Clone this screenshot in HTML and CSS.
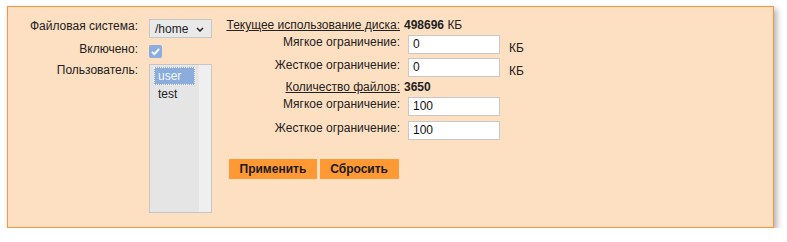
FILE: index.html
```html
<!DOCTYPE html>
<html>
<head>
<meta charset="utf-8">
<link rel="stylesheet" href="styles.css">
</head>
<body>
<div class="panel">
  <div class="left">
    <div class="lbl">Файловая система:</div>
    <div class="select"><span>/home</span><svg class="chev" width="8" height="5" viewBox="0 0 8 5"><path d="M1 1 L4 4 L7 1" fill="none" stroke="#222" stroke-width="1.5"/></svg></div>
    <div class="lbl">Включено:</div>
    <div class="check"><svg width="13" height="13" viewBox="0 0 13 13"><path d="M3 6.8 L5.4 9.2 L10.2 3.8" fill="none" stroke="#fff" stroke-width="1.8"/></svg></div>
    <div class="lbl">Пользователь:</div>
    <div class="listbox">
      <div class="options">
        <div class="opt sel">user</div>
        <div class="opt">test</div>
      </div>
      <div class="scroll"></div>
    </div>
  </div>
  <div class="right">
    <div class="quota">
      <div class="head"><span class="u">Текущее использование диска:</span></div>
      <div class="val"><b>498696</b> КБ</div>
      <div></div>

      <div class="qlbl">Мягкое ограничение:</div>
      <div class="field"><div class="input">0</div></div>
      <div class="unit">КБ</div>

      <div class="qlbl">Жесткое ограничение:</div>
      <div class="field"><div class="input">0</div></div>
      <div class="unit">КБ</div>

      <div class="head"><span class="u">Количество файлов:</span></div>
      <div class="val"><b>3650</b></div>
      <div></div>

      <div class="qlbl">Мягкое ограничение:</div>
      <div class="field"><div class="input">100</div></div>
      <div></div>

      <div class="qlbl">Жесткое ограничение:</div>
      <div class="field"><div class="input">100</div></div>
      <div></div>
    </div>
    <div class="buttons">
      <button class="btn">Применить</button>
      <button class="btn">Сбросить</button>
    </div>
  </div>
</div>
</body>
</html>
```
FILE: styles.css
```css
html, body {
  margin: 0;
  padding: 0;
  background: #ffffff;
}
body {
  font-family: "Liberation Sans", Arial, sans-serif;
  font-size: 12px;
  line-height: 14px;
  color: #222;
}
.panel {
  box-sizing: border-box;
  margin: 6px 0 0 7px;
  width: 767px;
  height: 222px;
  background: #fddfc2;
  border: 1px solid #f7983f;
  box-shadow: 3px 3px 6px rgba(0, 0, 0, 0.3);
  padding-top: 11px;
  display: flex;
  column-gap: 11px;
}
.left {
  margin-top: 1px;
  display: grid;
  grid-template-columns: 130px 63px;
  grid-template-rows: 23px 21px auto;
  column-gap: 11px;
  align-items: start;
}
.lbl {
  text-align: right;
  white-space: nowrap;
}
.select {
  box-sizing: border-box;
  height: 19px;
  border: 1px solid #c6c6c6;
  background: #e9e9e9;
  padding-left: 5px;
  padding-right: 7px;
  display: flex;
  align-items: center;
  justify-content: space-between;
  line-height: 14px;
}
.chev {
  display: block;
  margin-top: 1px;
}
.check {
  margin-top: 3px;
  width: 13px;
  height: 13px;
  border-radius: 2px;
  background: #8aaee0;
}
.check svg {
  display: block;
}
.listbox {
  margin-top: 1px;
  box-sizing: border-box;
  height: 149px;
  border: 1px solid #c6c6c6;
  background: #e5e5e5;
  display: flex;
}
.options {
  flex: 1;
  padding: 2px 4px 0 4px;
}
.opt {
  height: 18px;
  line-height: 18px;
  padding-left: 4px;
}
.opt.sel {
  background: #8aaddc;
  color: #f4f7fc;
  outline: 1px dotted #ffffff;
  outline-offset: -1px;
}
.scroll {
  width: 12px;
  background: #efefef;
}
.right {
  display: flex;
  flex-direction: column;
}
.quota {
  display: grid;
  grid-template-columns: 177px auto auto;
  grid-template-rows: 16px 23px 23px 16px 24px 24px;
  column-gap: 4px;
  align-items: start;
}
.head {
  text-align: right;
  white-space: nowrap;
}
.u {
  text-decoration: underline;
}
.val {
  white-space: nowrap;
}
.qlbl {
  text-align: right;
  white-space: nowrap;
  padding-top: 1px;
}
.field {
  padding-left: 4px;
  margin-top: 1px;
}
.input {
  box-sizing: border-box;
  width: 92px;
  height: 19px;
  border: 1px solid #c8c8c8;
  background: #ffffff;
  padding-left: 4px;
  line-height: 17px;
  color: #111;
}
.unit {
  margin-left: 5px;
  margin-top: 7px;
}
.buttons {
  margin-top: 15px;
  margin-left: 6px;
  display: flex;
  column-gap: 3px;
}
.btn {
  height: 20px;
  border: none;
  background: #ff9933;
  color: #1a1a1a;
  font-family: "Liberation Sans", Arial, sans-serif;
  font-size: 12px;
  font-weight: bold;
  padding: 0 10.5px;
  margin: 0;
  cursor: pointer;
}
```
